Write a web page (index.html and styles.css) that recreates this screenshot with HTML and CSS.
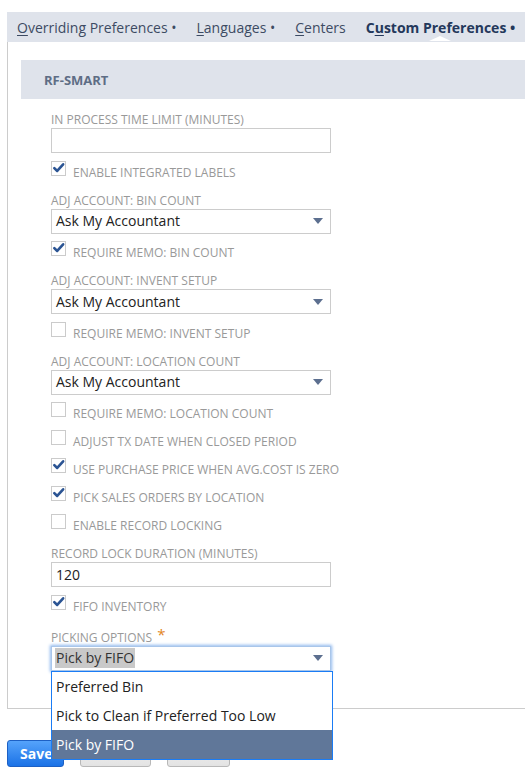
FILE: index.html
```html
<!DOCTYPE html>
<html>
<head>
<meta charset="utf-8">
<link rel="stylesheet" href="styles.css">
</head>
<body>
<div class="page">
  <div class="tabs">
    <span class="tab"><u>O</u>verriding Preferences •</span>
    <span class="tab"><u>L</u>anguages •</span>
    <span class="tab"><u>C</u>enters</span>
    <span class="tab tab-active">C<u>u</u>stom Preferences •</span>
  </div>
  <div class="panel">
    <div class="section-header">RF-SMART</div>
    <div class="fields">
      <div class="label">In process time limit (minutes)</div>
      <div class="input"></div>

      <div class="check-row"><span class="box checked"><svg viewBox="0 0 14 14" width="14" height="14"><path d="M2.5 7.2 L5.6 10.2 L12 3" fill="none" stroke="#2b5493" stroke-width="2.8" stroke-linecap="round" stroke-linejoin="round"/></svg></span><span class="check-text">Enable integrated labels</span></div>

      <div class="label">Adj account: bin count</div>
      <div class="select"><span class="select-value">Ask My Accountant</span><svg class="arrow" viewBox="0 0 10 6" width="10" height="6"><path d="M0 0 H10 L5 6 Z" fill="#5c6f8f"/></svg></div>
      <div class="check-row"><span class="box checked"><svg viewBox="0 0 14 14" width="14" height="14"><path d="M2.5 7.2 L5.6 10.2 L12 3" fill="none" stroke="#2b5493" stroke-width="2.8" stroke-linecap="round" stroke-linejoin="round"/></svg></span><span class="check-text">Require memo: bin count</span></div>

      <div class="label">Adj account: invent setup</div>
      <div class="select"><span class="select-value">Ask My Accountant</span><svg class="arrow" viewBox="0 0 10 6" width="10" height="6"><path d="M0 0 H10 L5 6 Z" fill="#5c6f8f"/></svg></div>
      <div class="check-row"><span class="box"></span><span class="check-text">Require memo: invent setup</span></div>

      <div class="label">Adj account: location count</div>
      <div class="select"><span class="select-value">Ask My Accountant</span><svg class="arrow" viewBox="0 0 10 6" width="10" height="6"><path d="M0 0 H10 L5 6 Z" fill="#5c6f8f"/></svg></div>
      <div class="check-row"><span class="box"></span><span class="check-text">Require memo: location count</span></div>
      <div class="check-row"><span class="box"></span><span class="check-text">Adjust tx date when closed period</span></div>
      <div class="check-row"><span class="box checked"><svg viewBox="0 0 14 14" width="14" height="14"><path d="M2.5 7.2 L5.6 10.2 L12 3" fill="none" stroke="#2b5493" stroke-width="2.8" stroke-linecap="round" stroke-linejoin="round"/></svg></span><span class="check-text">Use purchase price when avg.cost is zero</span></div>
      <div class="check-row"><span class="box checked"><svg viewBox="0 0 14 14" width="14" height="14"><path d="M2.5 7.2 L5.6 10.2 L12 3" fill="none" stroke="#2b5493" stroke-width="2.8" stroke-linecap="round" stroke-linejoin="round"/></svg></span><span class="check-text">Pick sales orders by location</span></div>
      <div class="check-row"><span class="box"></span><span class="check-text">Enable record locking</span></div>

      <div class="label">Record lock duration (minutes)</div>
      <div class="input"><span class="input-value">120</span></div>
      <div class="check-row"><span class="box checked"><svg viewBox="0 0 14 14" width="14" height="14"><path d="M2.5 7.2 L5.6 10.2 L12 3" fill="none" stroke="#2b5493" stroke-width="2.8" stroke-linecap="round" stroke-linejoin="round"/></svg></span><span class="check-text">FIFO inventory</span></div>

      <div class="label label-required">Picking options <span class="req">*</span></div>
      <div class="select-wrap">
        <div class="select select-focus"><span class="select-value select-hl">Pick by FIFO</span><svg class="arrow" viewBox="0 0 10 6" width="10" height="6"><path d="M0 0 H10 L5 6 Z" fill="#5c6f8f"/></svg></div>
        <ul class="dropdown">
          <li class="option">Preferred Bin</li>
          <li class="option">Pick to Clean if Preferred Too Low</li>
          <li class="option option-active">Pick by FIFO</li>
        </ul>
      </div>
    </div>
  </div>
  <div class="buttons">
    <button class="btn btn-primary">Save</button>
    <button class="btn btn-secondary btn-cancel">Cancel</button>
    <button class="btn btn-secondary btn-reset">Reset</button>
  </div>
</div>
</body>
</html>
```
FILE: styles.css
```css
* { box-sizing: border-box; }
html, body { margin: 0; padding: 0; background: #fff; }
body { font-family: "Open Sans", "Liberation Sans", sans-serif; }

.page { padding: 12px 0 0 7px; }

.tabs {
  height: 30px;
  background: #dfe3eb;
  display: flex;
  align-items: center;
  gap: 20px;
  padding: 2px 0 0 10px;
  white-space: nowrap;
  font-size: 14px;
  color: #3d4b63;
  overflow: hidden;
}
.tab { position: relative; line-height: 26px; }
.tab u { text-underline-offset: 2px; }
.tab-active { font-weight: 700; color: #24385b; }
.tab-active::after {
  content: "";
  position: absolute;
  left: 50%;
  bottom: 0;
  margin-left: -11px;
  width: 0; height: 0;
  border-left: 11px solid transparent;
  border-right: 11px solid transparent;
  border-bottom: 5px solid #fff;
}

.panel {
  border-left: 1px solid #cccccc;
  border-bottom: 1px solid #cccccc;
  padding: 18px 0 37px 13px;
}

.section-header {
  height: 39px;
  background: #dfe3eb;
  padding-left: 23px;
  display: flex;
  align-items: center;
  font-size: 13px;
  font-weight: 700;
  color: #5e6d85;
}

.fields { padding: 12px 0 0 30px; }

.label {
  font-size: 12px;
  line-height: 17px;
  color: #999999;
  text-transform: uppercase;
  margin-top: 5.5px;
  white-space: nowrap;
}
.fields > .label:first-child { margin-top: 0; }
.label-required { margin-top: 7.5px; }
.req { color: #e2861c; font-size: 15px; position: relative; top: -2px; margin-left: 2px; }

.input, .select {
  width: 280px;
  height: 25px;
  border: 1px solid #cccccc;
  background: #fff;
  display: flex;
  align-items: center;
  padding-left: 3px;
  font-size: 14px;
  color: #222;
}
.select { justify-content: space-between; padding-right: 7px; }
.select-value, .input-value { line-height: 20px; padding: 0 1px; }

.check-row {
  height: 28px;
  margin-top: 5px;
  display: flex;
  align-items: center;
  gap: 7px;
}
.check-row + .check-row { margin-top: 0; }
.box {
  width: 15px;
  height: 15px;
  border: 1px solid #cbcbcb;
  background: #fff;
  margin-bottom: 8px;
  display: flex;
  align-items: center;
  justify-content: center;
  flex: none;
}
.box svg { display: block; margin-top: -1px; }
.check-text {
  font-size: 12px;
  color: #999999;
  text-transform: uppercase;
  white-space: nowrap;
}

.select-wrap { position: relative; width: 282px; }
.select-focus {
  border-color: #a9c6ea;
  box-shadow: 0 0 3px 1px #8fb8ee;
}
.select-hl { background: #c9c9c9; color: #333; }

.dropdown {
  position: absolute;
  left: 0;
  top: 25px;
  width: 282px;
  margin: 0;
  padding: 0;
  list-style: none;
  background: #fff;
  border: 1px solid #1a7cf5;
  z-index: 5;
}
.option {
  height: 29px;
  line-height: 29px;
  padding-left: 4px;
  font-size: 14px;
  color: #222;
  white-space: nowrap;
}
.option-active { background: #607799; color: #fff; }

.buttons {
  margin-top: 31px;
  display: flex;
  align-items: flex-end;
  gap: 16px;
}
.btn {
  font-family: "Open Sans", "Liberation Sans", sans-serif;
  border-radius: 3px;
  font-size: 14px;
  margin: 0;
  height: 27px;
  padding-top: 0;
  padding-bottom: 4px;
}
.btn-primary {
  width: 57px;
  background: linear-gradient(#55a3fb, #1b72e6);
  border: 1px solid #1d60c4;
  color: #fff;
  font-weight: 700;
  text-align: left;
  padding: 0 0 0 12px;
}
.btn-secondary {
  background: linear-gradient(#f5f5f5, #e3e3e3);
  border: 1px solid #b8b8b8;
  color: #333;
  font-weight: 700;
}
.btn-cancel { width: 71px; }
.btn-reset { width: 63px; }
```
